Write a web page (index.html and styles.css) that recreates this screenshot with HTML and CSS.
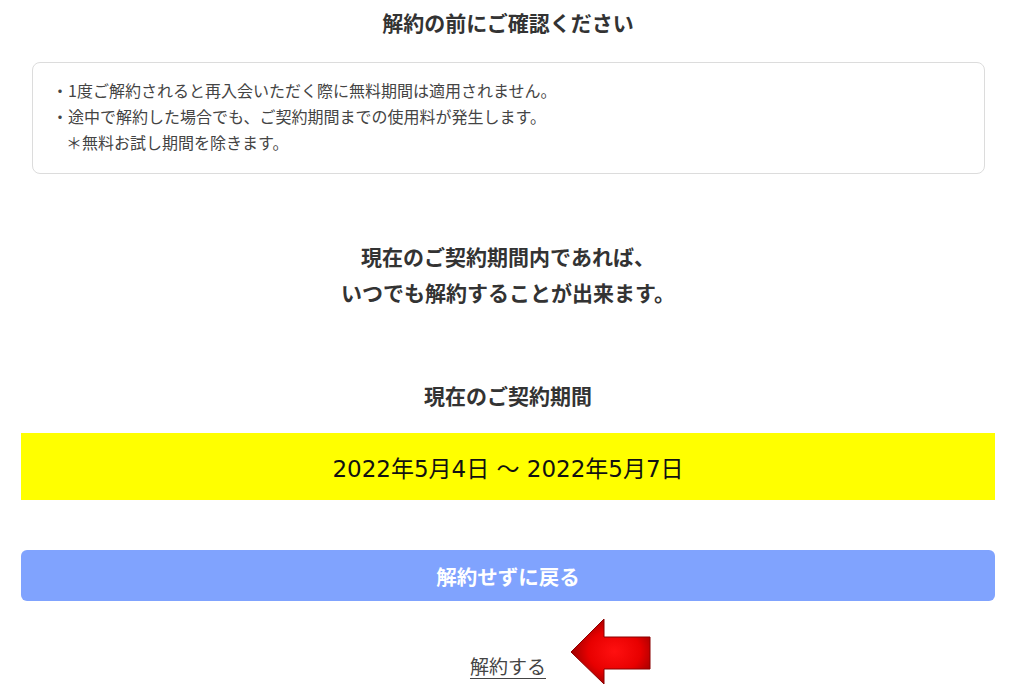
FILE: index.html
```html
<!DOCTYPE html>
<html lang="ja">
<head>
  <meta charset="UTF-8" />
  <meta name="viewport" content="width=device-width, initial-scale=1.0"/>
  <title>解約の前にご確認ください</title>
  <link rel="stylesheet" href="styles.css">
</head>
<body>
  <div class="page">
    <h1 class="title">解約の前にご確認ください</h1>

    <div class="notice">
      <p>・1度ご解約されると再入会いただく際に無料期間は適用されません。</p>
      <p>・途中で解約した場合でも、ご契約期間までの使用料が発生します。</p>
      <p class="indent">＊無料お試し期間を除きます。</p>
    </div>

    <p class="lead">現在のご契約期間内であれば、<br>いつでも解約することが出来ます。</p>

    <h2 class="period-label">現在のご契約期間</h2>
    <div class="period">2022年5月4日 〜 2022年5月7日</div>

    <button class="back-btn" type="button">解約せずに戻る</button>

    <div class="cancel-row">
      <span class="cancel-wrap">
        <a class="cancel-link" href="#">解約する</a>
        <svg class="arrow" viewBox="0 0 82 68" width="82" height="68">
          <defs>
            <radialGradient id="arrowFill" cx="55%" cy="50%" r="60%">
              <stop offset="0%" stop-color="#ff1010" />
              <stop offset="55%" stop-color="#e80000" />
              <stop offset="100%" stop-color="#8e0000" />
            </radialGradient>
          </defs>
          <polygon points="1,34 34,1 34,19 80,19 80,51 34,51 34,66" fill="url(#arrowFill)" stroke="#8a0000" stroke-width="1" stroke-linejoin="miter" />
        </svg>
      </span>
    </div>
  </div>
</body>
</html>
```

FILE: styles.css
```css
html, body {
  margin: 0;
  padding: 0;
  background-color: #fff;
  font-family: "Noto Sans CJK JP", "Noto Sans", sans-serif;
  color: #333;
}

.page {
  padding: 7px 29px 20px 21px;
}

.title {
  margin: 0;
  font-size: 21px;
  font-weight: bold;
  line-height: 30px;
  text-align: center;
}

.notice {
  margin: 25px 10px 0 11px;
  padding: 14px 19px 18px;
  border: 1px solid #dcdcdc;
  border-radius: 8px;
  font-size: 16px;
  line-height: 26px;
  color: #444;
}

.notice p {
  margin: 0;
}

.notice .indent {
  padding-left: 14px;
}

.lead {
  margin: 64px 0 0;
  font-size: 21px;
  font-weight: bold;
  line-height: 36px;
  text-align: center;
}

.period-label {
  margin: 70px 0 0;
  font-size: 21px;
  font-weight: bold;
  line-height: 30px;
  text-align: center;
}

.period {
  margin-top: 23px;
  height: 67px;
  background-color: #ffff00;
  display: flex;
  align-items: center;
  justify-content: center;
  font-family: "DejaVu Sans", "Noto Sans CJK JP", sans-serif;
  font-size: 23px;
  color: #111;
}

.back-btn {
  display: block;
  width: 100%;
  margin-top: 50px;
  height: 51px;
  border: none;
  border-radius: 6px;
  background-color: #80a3fe;
  color: #fff;
  font-family: inherit;
  font-size: 20.5px;
  font-weight: bold;
  cursor: pointer;
}

.cancel-row {
  margin-top: 50px;
  display: flex;
  justify-content: center;
}

.cancel-wrap {
  position: relative;
  line-height: 30px;
}

.cancel-link {
  font-size: 19px;
  color: #444;
  text-decoration: underline;
  text-underline-offset: 4px;
}

.arrow {
  position: absolute;
  left: calc(100% + 24px);
  top: -33px;
}
```
